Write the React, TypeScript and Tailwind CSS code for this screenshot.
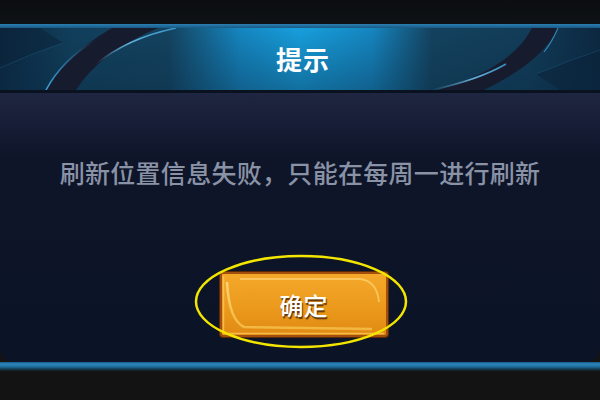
import React from 'react'

const cjk = { fontFamily: '"Noto Sans CJK SC", "Noto Sans", sans-serif' }

function HeaderArt() {
  return (
    <svg className="absolute inset-0" width="600" height="62" viewBox="0 0 600 62">
      <defs>
        <linearGradient id="lineL" x1="0" y1="1" x2="1" y2="0">
          <stop offset="0" stopColor="#3fb0e8" stopOpacity="0.9" />
          <stop offset="1" stopColor="#3fb0e8" stopOpacity="0" />
        </linearGradient>
        <linearGradient id="lineR" x1="0" y1="1" x2="1" y2="0">
          <stop offset="0" stopColor="#7cc8ee" stopOpacity="0" />
          <stop offset="0.5" stopColor="#6cc0ec" stopOpacity="0.9" />
          <stop offset="1" stopColor="#3fa8e0" stopOpacity="0.8" />
        </linearGradient>
      </defs>
      {/* corner wedges */}
      <path d="M0 0 L40 0 L63 15 Q 30 26 0 40 Z" fill="#0a2238" opacity="0.5" />
      <path d="M0 40 Q 30 26 63 15" stroke="#2c6f98" strokeWidth="1" fill="none" opacity="0.3" />
      <path d="M600 62 L560 62 L536 46 Q 570 32 600 22 Z" fill="#0a2238" opacity="0.5" />
      <path d="M600 22 Q 570 32 536 46" stroke="#2c6f98" strokeWidth="1" fill="none" opacity="0.3" />
      {/* left band */}
      <path d="M112 0 Q 64 28 46 62 L 76 62 Q 100 24 158 0 Z" fill="#171b2e" />
      <path d="M46 62 Q 62 32 96 12" stroke="url(#lineL)" strokeWidth="1.5" fill="none" />
      <path d="M96 36 Q 128 10 176 0" stroke="url(#lineR)" strokeWidth="1.5" fill="none" />
      {/* right band */}
      <path d="M532 0 Q 512 40 438 62 L 484 62 Q 542 34 558 0 Z" fill="#171b2e" />
      <path d="M432 62 Q 478 52 506 36" stroke="url(#lineR)" strokeWidth="1.5" fill="none" />
      <path d="M558 0 Q 552 14 544 24" stroke="#3fa8e0" strokeWidth="1.2" fill="none" opacity="0.7" />
    </svg>
  )
}

function ButtonArt() {
  return (
    <svg className="absolute inset-0" width="164" height="61" viewBox="0 0 164 61">
      <defs>
        <linearGradient id="gold" x1="0" y1="0" x2="0" y2="1">
          <stop offset="0" stopColor="#ffe08a" />
          <stop offset="1" stopColor="#f7c24a" />
        </linearGradient>
      </defs>
      <path d="M1.5 2 L1.5 59.5 L162 59.5" stroke="#f9c85a" strokeWidth="1.5" fill="none" opacity="0.8" />
      <path d="M5 8 Q 7 46 22 53 L 150 55" stroke="url(#gold)" strokeWidth="2.5" fill="none" opacity="0.8" />
      <path d="M18 5 L 138 5 Q 155 7 157 28" stroke="#ffd878" strokeWidth="1.8" fill="none" opacity="0.65" />
    </svg>
  )
}

export default function App() {
  return (
    <div className="w-[600px] h-[400px] bg-[#131313] flex flex-col overflow-hidden" style={cjk}>
      <div className="h-[24px] bg-gradient-to-b from-[#0b0d0f] to-[#0e1317]" />
      <div className="h-[4px] bg-gradient-to-b from-[#2a7fb2] to-[#1a5a86]" />

      <div className="relative h-[62px] bg-[linear-gradient(90deg,#0c2740_0%,#113f5b_12%,#14425e_28%,#1586c0_40%,#179fdd_50%,#1586c0_62%,#14425e_72%,#123c58_88%,#0c2740_100%)]">
        <div className="absolute inset-0 bg-gradient-to-b from-transparent to-[#0a2a44]/40" />
        <HeaderArt />
        <div className="relative h-full flex items-center justify-center">
          <span className="text-[26px] font-semibold text-white leading-none tracking-[1px] pl-[6px]">提示</span>
        </div>
      </div>
      <div className="h-[3px] bg-[#0a1220]" />

      <div className="h-[269px] rounded-b-[14px] bg-[linear-gradient(180deg,#1f2641_0%,#171d35_12%,#0e1529_24%,#0b1326_100%)] flex flex-col items-center">
        <p className="mt-[58px] text-[25px] leading-[42px] font-medium tracking-[0.3px] text-[#8a92a6]">
          刷新位置信息失败，只能在每周一进行刷新
        </p>

        <div className="relative mt-[79px] ml-[7px]">
          <div className="relative w-[168px] h-[65px] rounded-[3px] border-2 border-[#a24e0c] bg-[linear-gradient(180deg,#f4a82a_0%,#eb9a1c_55%,#e08a14_100%)] shadow-[0_0_0_1px_#5a2a08] flex items-center justify-center">
            <ButtonArt />
            <span className="relative text-[24px] font-medium text-white leading-none [text-shadow:1px_2px_1px_rgba(70,35,0,0.85)]">确定</span>
          </div>
          <svg className="absolute left-[-26px] top-[-18px] pointer-events-none" width="214" height="95" viewBox="0 0 214 95">
            <ellipse cx="107" cy="47.5" rx="105" ry="45.5" stroke="#f2e600" strokeWidth="2.5" fill="none" />
          </svg>
        </div>
      </div>

      <div className="h-[9px] bg-[linear-gradient(180deg,#1d5c88_0%,#2b86bd_25%,#1e6a96_55%,#123a50_80%,#15191c_100%)]" />
      <div className="flex-1 bg-[#131313]" />
    </div>
  )
}
